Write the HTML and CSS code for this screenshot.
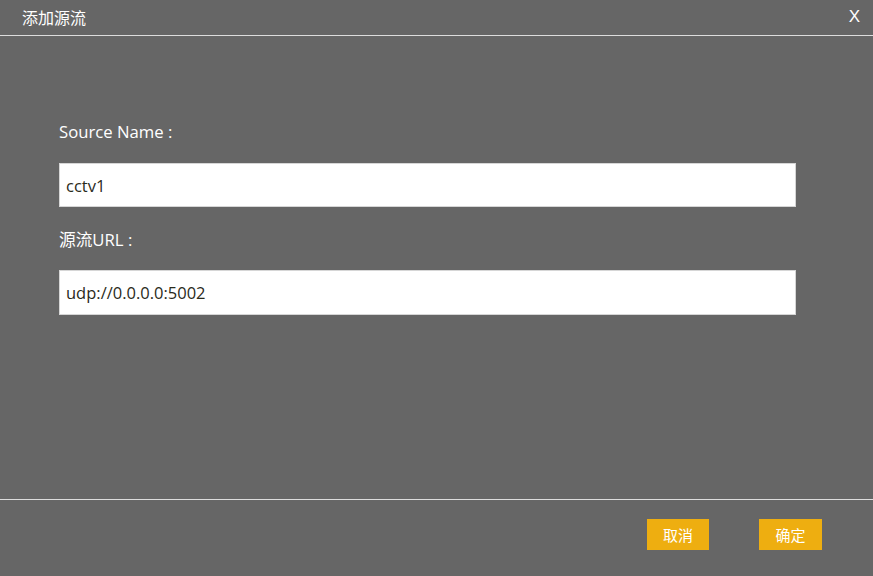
FILE: index.html
```html
<!DOCTYPE html>
<html lang="zh">
<head>
<meta charset="utf-8">
<title>添加源流</title>
<link rel="stylesheet" href="styles.css">
</head>
<body>
<div class="dialog">
  <div class="header">
    <span class="title">添加源流</span>
    <span class="close">X</span>
  </div>
  <div class="body">
    <label class="label label-first">Source Name :</label>
    <input class="field" type="text" value="cctv1">
    <label class="label">源流URL :</label>
    <input class="field field-second" type="text" value="udp://0.0.0.0:5002">
  </div>
  <div class="footer">
    <button class="btn">取消</button>
    <button class="btn btn-wide">确定</button>
  </div>
</div>
</body>
</html>
```
FILE: styles.css
```css
* { box-sizing: border-box; }
html, body { margin: 0; padding: 0; }
body {
  width: 873px;
  height: 576px;
  background: #666666;
  font-family: "Open Sans", "Noto Sans CJK SC", sans-serif;
  color: #ffffff;
  overflow: hidden;
}
.dialog {
  width: 873px;
  height: 576px;
  display: flex;
  flex-direction: column;
  background: #666666;
}
.header {
  height: 36px;
  border-bottom: 1px solid #dddddd;
  display: flex;
  justify-content: space-between;
  align-items: center;
  padding: 0 13px 1px 22px;
}
.title {
  font-size: 16px;
  font-family: "Noto Sans CJK SC", sans-serif;
  line-height: 20px;
}
.close {
  font-size: 17px;
  font-family: "Liberation Sans", sans-serif;
  line-height: 20px;
}
.body {
  height: 463px;
  display: flex;
  flex-direction: column;
  padding: 0 77px 0 59px;
}
.label {
  font-size: 16.7px;
  line-height: 20px;
  margin-top: 23px;
  color: #ffffff;
}
.label-first { margin-top: 86px; }
.field {
  display: block;
  width: 737px;
  height: 44px;
  margin-top: 21px;
  border: 1px solid #d6d6d6;
  background: #ffffff;
  padding: 0 6px;
  font-family: "Open Sans", "Noto Sans CJK SC", sans-serif;
  font-size: 16.5px;
  color: #2a2a1a;
  outline: none;
}
.field-second { height: 45px; margin-top: 20px; }
.footer {
  flex: 1;
  border-top: 1px solid #dddddd;
  display: flex;
  justify-content: flex-end;
  align-items: flex-start;
  gap: 50px;
  padding: 19px 51px 0 0;
}
.btn {
  width: 62px;
  height: 31px;
  border: none;
  background: #eeae10;
  color: #ffffff;
  font-family: "Noto Sans CJK SC", sans-serif;
  font-size: 15px;
  padding: 0;
  cursor: pointer;
}
.btn-wide { width: 63px; }
```
